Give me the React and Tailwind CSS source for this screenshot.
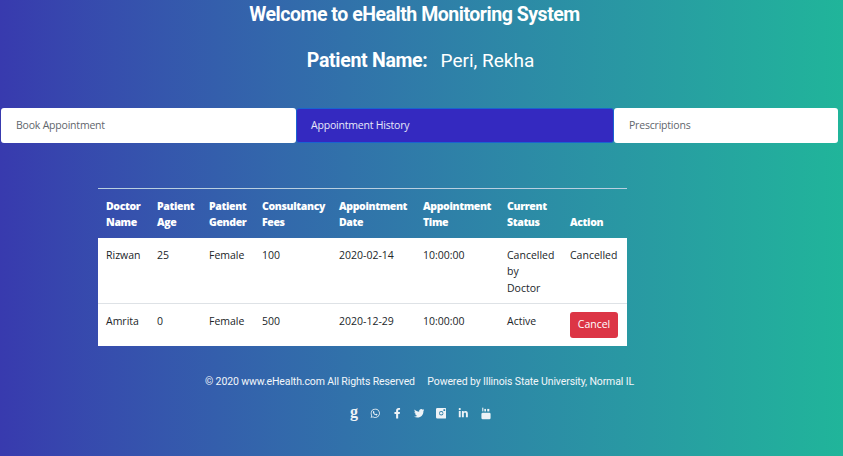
import React from 'react';
import { FaWhatsapp, FaFacebookF, FaTwitter, FaLinkedinIn } from 'react-icons/fa';

const HEADERS = [
    ['Doctor', 'Name'],
    ['Patient', 'Age'],
    ['Patient', 'Gender'],
    ['Consultancy', 'Fees'],
    ['Appointment', 'Date'],
    ['Appointment', 'Time'],
    ['Current', 'Status'],
    ['Action'],
];

const APPOINTMENTS = [
    { doctor: 'Rizwan', age: 25, gender: 'Female', fees: 100, date: '2020-02-14', time: '10:00:00', status: 'Cancelled by Doctor', action: 'Cancelled' },
    { doctor: 'Amrita', age: 0, gender: 'Female', fees: 500, date: '2020-12-29', time: '10:00:00', status: 'Active', action: null },
];

const InstagramIcon = () => (
    <svg viewBox="0 0 12 12" className="w-[10.5px] h-[10.5px]" fill="currentColor">
        <path fillRule="evenodd" d="M1.5 0h9A1.5 1.5 0 0 1 12 1.5v9a1.5 1.5 0 0 1-1.5 1.5h-9A1.5 1.5 0 0 1 0 10.5v-9A1.5 1.5 0 0 1 1.5 0zM8.5 1.5v2h2v-2zM6 3.5a2.5 2.5 0 1 0 0 5 2.5 2.5 0 0 0 0-5z" />
        <circle cx="6" cy="6" r="1.5" />
    </svg>
);

const YoutubeIcon = () => (
    <svg viewBox="0 0 12 14" className="w-[10px] h-[13px] ml-[1.5px]" fill="currentColor">
        <rect x="1.5" y="0" width="1.3" height="4.5" />
        <rect x="4" y="1.5" width="2" height="3" />
        <rect x="7.5" y="1.5" width="2.5" height="3" />
        <rect x="0.5" y="6" width="11" height="8" rx="1.5" />
    </svg>
);

const Tab = ({ label, active, className }) => (
    <div className={`h-[35px] flex items-center rounded-[3px] text-[10.5px] tracking-[-0.2px] ${active ? 'pl-[14px] bg-[#3429c0] text-[#e8e8f8] border border-[#1a63d0]' : 'pl-[15px] bg-white text-[#5f666d]'} ${className}`}>
        {label}
    </div>
);

const App = () => {
    return (
        <div className="w-[843px] h-[456px] overflow-hidden bg-gradient-to-r from-[#383aae] to-[#20b59a] text-white font-['Open_Sans',sans-serif]">
            <h1 className="pt-[2px] h-[29px] text-center text-[19.5px] leading-[26px] tracking-[-0.47px] font-bold font-['Roboto',sans-serif] pr-[14px]">
                Welcome to eHealth Monitoring System
            </h1>
            <div className="mt-[18px] h-[28px] flex justify-center items-center gap-[13px] pr-[2px] font-['Roboto',sans-serif]">
                <span className="font-bold text-[19.5px] tracking-[-0.3px]">Patient Name:</span>
                <span className="font-normal text-[19px]">Peri, Rekha</span>
            </div>

            <div className="mt-[33px] pl-[1px] flex">
                <Tab label="Book Appointment" className="w-[295px]" />
                <Tab label="Appointment History" active className="w-[318px]" />
                <Tab label="Prescriptions" className="w-[224px]" />
            </div>

            <div className="mt-[45px] ml-[98px] w-[529px]">
                <table className="w-full table-fixed border-collapse text-[10.5px] leading-[16.5px]">
                    <colgroup>
                        <col className="w-[51px]" />
                        <col className="w-[52px]" />
                        <col className="w-[53px]" />
                        <col className="w-[77px]" />
                        <col className="w-[84px]" />
                        <col className="w-[84px]" />
                        <col className="w-[63px]" />
                        <col className="w-[65px]" />
                    </colgroup>
                    <thead>
                        <tr className="h-[49px] border-t border-[#b9cfe0]">
                            {HEADERS.map((lines, i) => (
                                <th key={i} className="px-[8px] pb-[7px] text-left align-bottom font-extrabold tracking-[-0.35px] whitespace-nowrap">
                                    {lines.map((line) => <div key={line}>{line}</div>)}
                                </th>
                            ))}
                        </tr>
                    </thead>
                    <tbody className="bg-white text-[#212529]">
                        {APPOINTMENTS.map((row, i) => (
                            <tr key={row.doctor} className={i > 0 ? 'border-t border-[#dee2e6]' : ''}>
                                <td className="px-[8px] pt-[9px] pb-[6.5px] align-top">{row.doctor}</td>
                                <td className="px-[8px] pt-[9px] pb-[6.5px] align-top">{row.age}</td>
                                <td className="px-[8px] pt-[9px] pb-[6.5px] align-top">{row.gender}</td>
                                <td className="px-[8px] pt-[9px] pb-[6.5px] align-top">{row.fees}</td>
                                <td className="px-[8px] pt-[9px] pb-[6.5px] align-top">{row.date}</td>
                                <td className="px-[8px] pt-[9px] pb-[6.5px] align-top">{row.time}</td>
                                <td className="px-[8px] pt-[9px] pb-[6.5px] align-top">{row.status}</td>
                                <td className={`px-[8px] align-top ${row.action ? 'pt-[9px] pb-[6.5px]' : 'py-[8px]'}`}>
                                    {row.action || (
                                        <button className="block w-[48px] h-[26px] rounded-[3px] bg-[#dc3545] text-white text-[10.5px]">
                                            Cancel
                                        </button>
                                    )}
                                </td>
                            </tr>
                        ))}
                    </tbody>
                </table>
            </div>

            <p className="mt-[28px] ml-[205px] h-[16px] leading-[16px] text-[10.5px] tracking-[-0.12px] text-[#f2f6fa] font-['Roboto',sans-serif] whitespace-pre">
                © 2020 www.eHealth.com All Rights Reserved     Powered by Illinois State University, Normal IL
            </p>

            <div className="mt-[16px] ml-[350px] flex items-center gap-[11.5px] text-[#eef3f7] text-[10.5px]">
                <span className="font-['Liberation_Serif',serif] font-bold text-[16px] leading-[12px] pb-[4px]">g</span>
                <FaWhatsapp />
                <FaFacebookF />
                <FaTwitter />
                <InstagramIcon />
                <FaLinkedinIn />
                <YoutubeIcon />
            </div>
        </div>
    );
};

export default App;
